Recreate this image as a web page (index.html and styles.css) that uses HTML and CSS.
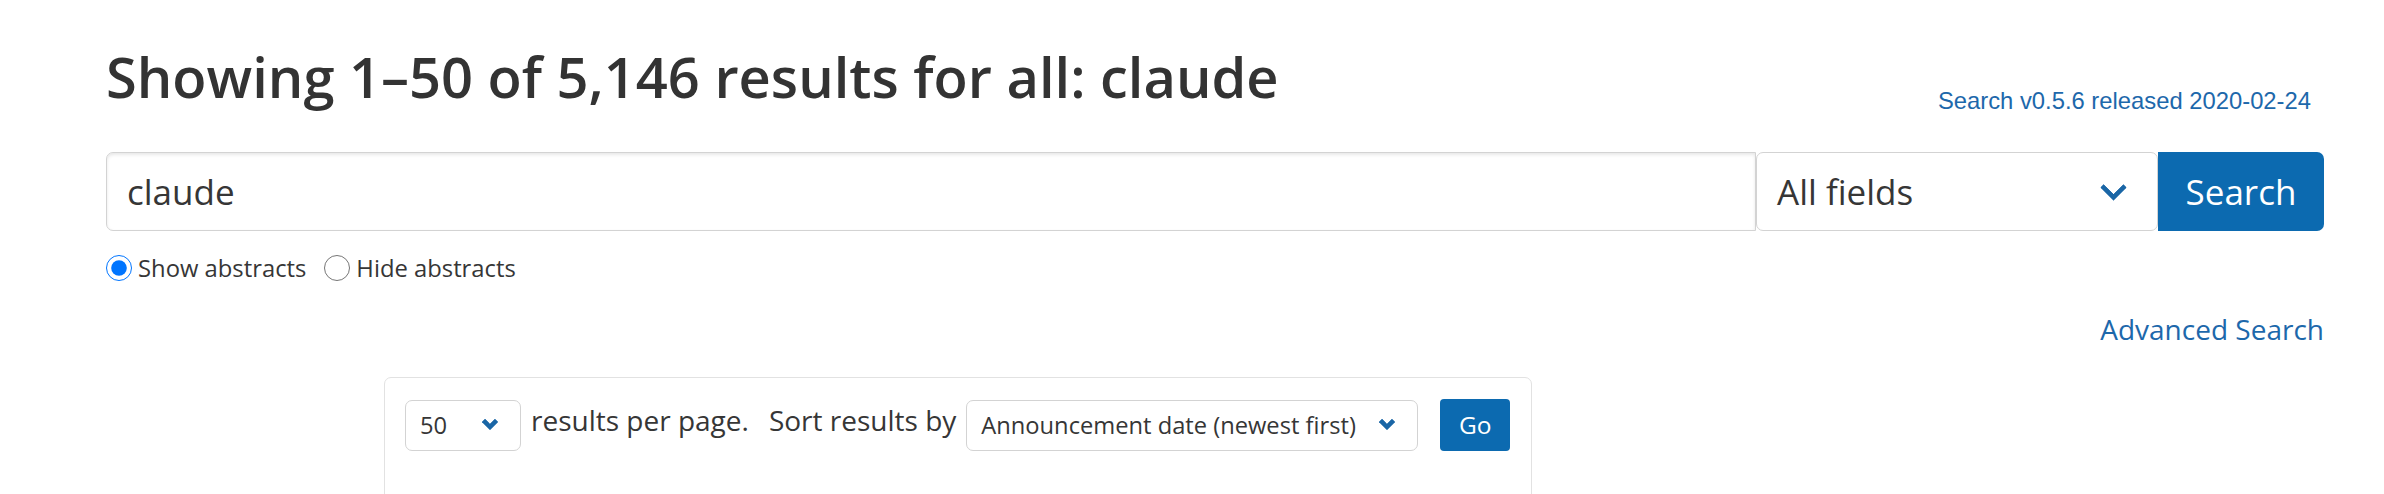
FILE: index.html
```html
<!DOCTYPE html>
<html lang="en">
<head>
<meta charset="utf-8">
<title>Search | arXiv e-print repository</title>
<link rel="stylesheet" href="styles.css">
</head>
<body>
<main class="page">
  <div class="header">
    <h1 class="title">Showing 1–50 of 5,146 results for all: claude</h1>
    <a class="release" href="#">Search v0.5.6 released 2020-02-24</a>
  </div>

  <form class="search-row">
    <input class="query" type="text" value="claude">
    <div class="field-select">
      <span class="field-label">All fields</span>
      <span class="arrow arrow-lg"></span>
    </div>
    <button class="search-btn" type="button">Search</button>
  </form>

  <div class="radios">
    <label class="radio"><input type="radio" name="abs" checked><span>Show abstracts</span></label>
    <label class="radio"><input type="radio" name="abs"><span>Hide abstracts</span></label>
  </div>

  <div class="adv-row"><a class="adv" href="#">Advanced Search</a></div>

  <div class="box">
    <div class="controls">
      <div class="small-select per-page-select">
        <span>50</span>
        <span class="arrow arrow-sm"></span>
      </div>
      <span class="ctrl-text">results per page.</span>
      <span class="ctrl-text sort-label">Sort results by</span>
      <div class="small-select sort-select">
        <span>Announcement date (newest first)</span>
        <span class="arrow arrow-sm"></span>
      </div>
      <button class="go-btn" type="button">Go</button>
    </div>
  </div>
</main>
</body>
</html>
```

FILE: styles.css
```css
* { box-sizing: border-box; }

html, body {
  margin: 0;
  padding: 0;
  background: #ffffff;
}

body {
  font-family: "Open Sans", "Noto Sans", sans-serif;
  color: #363636;
  font-size: 28px;
}

.page {
  padding: 45px 60px 0 106px;
}

.header {
  display: flex;
  justify-content: space-between;
  align-items: flex-start;
  height: 107px;
}

.title {
  margin: 0;
  font-size: 56px;
  font-weight: 600;
  line-height: 63px;
  color: #333333;
  letter-spacing: 0;
}

.release {
  margin-top: 39px;
  margin-right: 13px;
  font-family: "Liberation Sans", Arial, sans-serif;
  font-size: 23.8px;
  line-height: 34px;
  color: #1d68ab;
  text-decoration: none;
}

.search-row {
  display: flex;
  margin: 0;
  height: 79px;
}

.query {
  flex: 1;
  height: 79px;
  border: 1.75px solid #d3d3d3;
  border-right-width: 1px;
  border-radius: 7px 0 0 7px;
  box-shadow: inset 0 1.75px 3.5px rgba(10, 10, 10, 0.1);
  padding: 0 0 0 20px;
  font-family: "Open Sans", sans-serif;
  font-size: 35px;
  color: #363636;
  outline: none;
  background: #fff;
}

.field-select {
  width: 402px;
  height: 79px;
  border: 1.75px solid #d3d3d3;
  border-radius: 7px;
  display: flex;
  align-items: center;
  justify-content: space-between;
  padding: 0 34px 0 20px;
  font-size: 35px;
  color: #363636;
  background: #fff;
}

.arrow {
  display: block;
  border-left: 5.25px solid #1a66a6;
  border-bottom: 5.25px solid #1a66a6;
  transform: rotate(-45deg);
  border-radius: 1px;
}

.arrow-lg {
  width: 19px;
  height: 19px;
  margin-top: -9px;
}

.arrow-sm {
  width: 12px;
  height: 12px;
  border-width: 5px;
  margin-top: -6px;
}

.search-btn {
  width: 166px;
  height: 79px;
  border: none;
  border-radius: 0 7px 7px 0;
  background: #0c6ab0;
  color: #ffffff;
  font-family: "Open Sans", sans-serif;
  font-size: 35px;
  padding: 0;
}

.radios {
  display: flex;
  margin-top: 19px;
  font-size: 23.8px;
  line-height: 36.75px;
}

.radio {
  display: flex;
  align-items: center;
  margin-right: 18px;
}

.radio input {
  width: 26px;
  height: 26px;
  margin: 0 6px 0 0;
}

.adv-row {
  display: flex;
  justify-content: flex-end;
  margin-top: 21px;
}

.adv {
  font-size: 28px;
  line-height: 42px;
  color: #1d68ab;
  text-decoration: none;
}

.box {
  margin-top: 27px;
  margin-left: 278px;
  width: 1148px;
  min-height: 160px;
  border: 1.75px solid #e2e2e2;
  border-radius: 7px;
  padding: 22px 20px;
}

.controls {
  display: flex;
  align-items: flex-start;
}

.small-select {
  height: 51px;
  border: 1.75px solid #d3d3d3;
  border-radius: 7px;
  display: flex;
  align-items: center;
  justify-content: space-between;
  font-size: 23.7px;
  color: #363636;
  background: #fff;
}

.per-page-select {
  width: 116px;
  padding: 0 24px 0 14px;
}

.sort-select {
  width: 452px;
  margin-left: 10px;
  padding: 0 24px 0 14px;
}

.ctrl-text {
  font-size: 28px;
  line-height: 40px;
  margin-left: 10px;
  white-space: nowrap;
}

.sort-label {
  margin-left: 20px;
}

.go-btn {
  width: 70px;
  height: 52px;
  margin-left: 22px;
  margin-top: -1px;
  border: none;
  border-radius: 4px;
  background: #0c6ab0;
  color: #ffffff;
  font-family: "Open Sans", sans-serif;
  font-size: 24.5px;
  padding: 0;
}
```
